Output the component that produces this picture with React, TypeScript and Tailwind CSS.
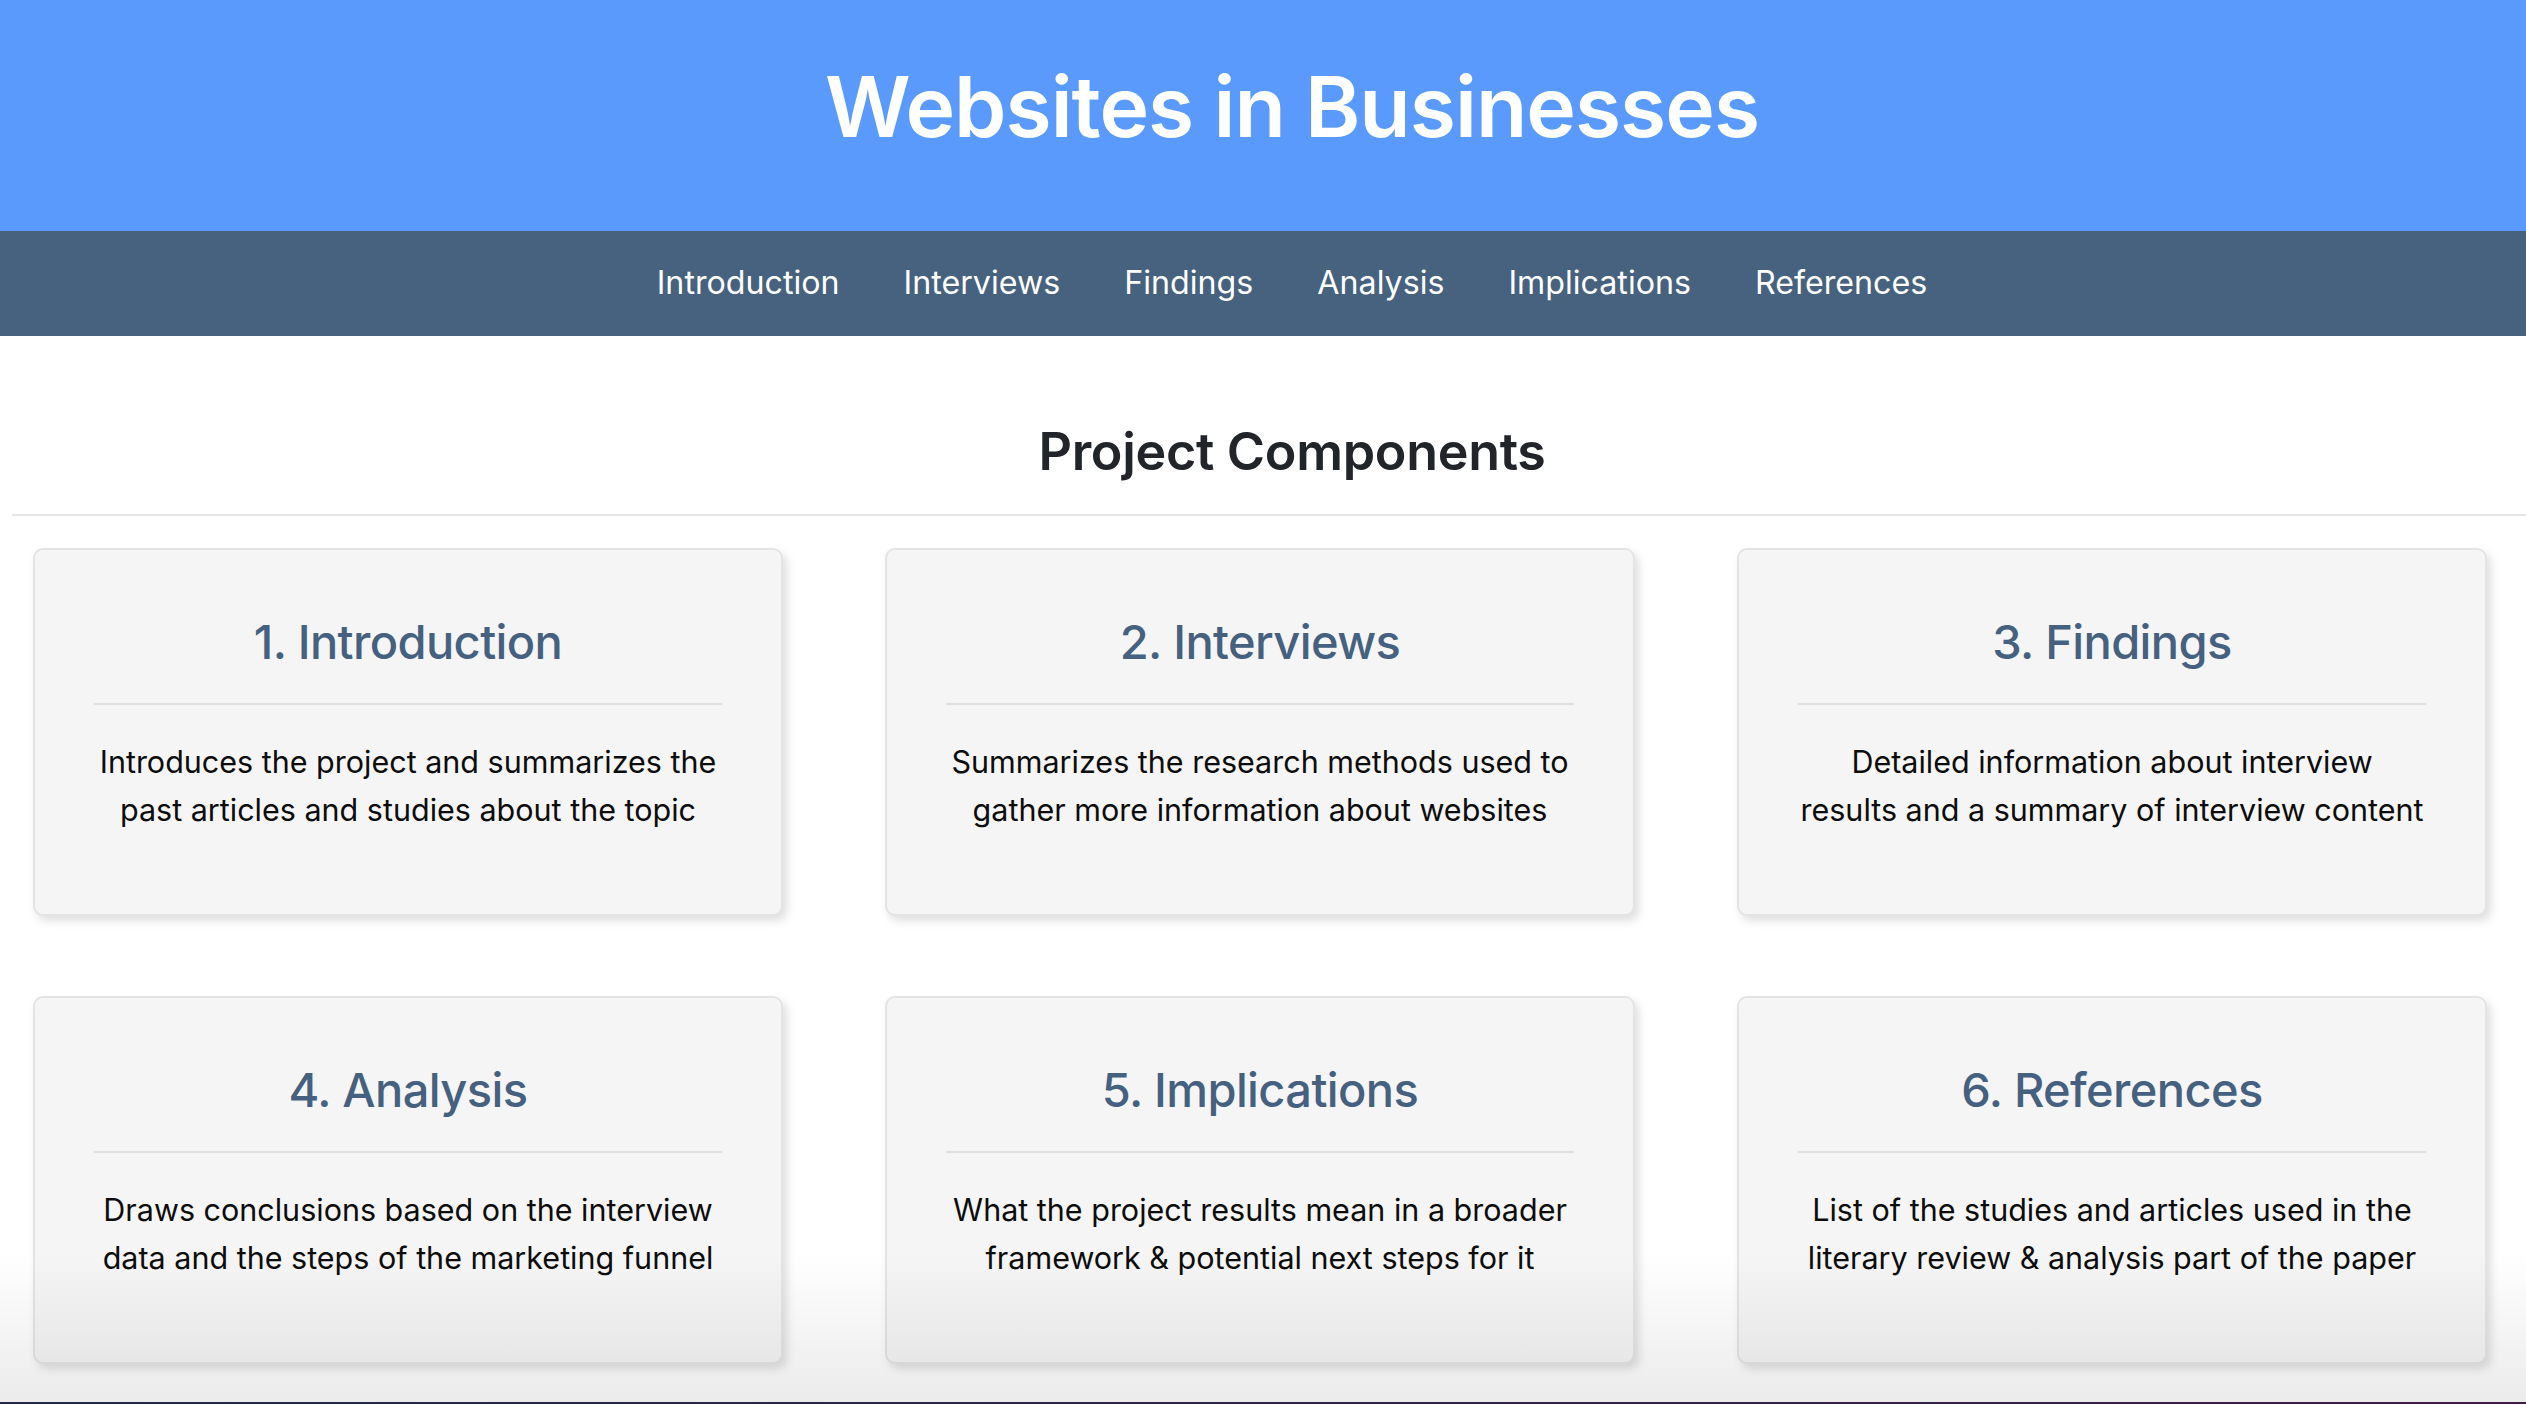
import React from 'react';

const navItems = ['Introduction', 'Interviews', 'Findings', 'Analysis', 'Implications', 'References'];

const components: { title: string; lines: string[] }[] = [
  { title: '1. Introduction', lines: ['Introduces the project and summarizes the', 'past articles and studies about the topic'] },
  { title: '2. Interviews', lines: ['Summarizes the research methods used to', 'gather more information about websites'] },
  { title: '3. Findings', lines: ['Detailed information about interview', 'results and a summary of interview content'] },
  { title: '4. Analysis', lines: ['Draws conclusions based on the interview', 'data and the steps of the marketing funnel'] },
  { title: '5. Implications', lines: ['What the project results mean in a broader', 'framework & potential next steps for it'] },
  { title: '6. References', lines: ['List of the studies and articles used in the', 'literary review & analysis part of the paper'] },
];

function ComponentCard({ title, lines }: { title: string; lines: string[] }) {
  return (
    <div className="h-[368px] rounded-[10px] border-2 border-[#e4e4e4] bg-[#f5f5f5] px-[59px] pt-[62px] shadow-[4px_5px_10px_rgba(0,0,0,0.13)]">
      <h3 className="text-center text-[47px] font-medium leading-[60px] tracking-[-0.6px] text-[#45617f]">{title}</h3>
      <div className="mt-[31px] h-[2px] bg-[#dedede]" />
      <p className="mt-[33px] text-center text-[30.5px] leading-[48px] text-[#0d0d0d]">
        {lines.map((line) => (
          <span key={line} className="block whitespace-nowrap">
            {line}
          </span>
        ))}
      </p>
    </div>
  );
}

export default function App() {
  return (
    <div className="relative min-h-[1404px] overflow-hidden bg-white font-['Inter','Liberation_Sans',sans-serif]">
      <header className="flex h-[231px] items-center justify-center bg-[#5a9afc] pl-[58px]">
        <h1 className="pb-[18px] text-[84px] font-semibold tracking-[-1px] text-white">Websites in Businesses</h1>
      </header>

      <nav className="flex h-[105px] items-center justify-center gap-[64px] bg-[#46627f] pl-[58px]">
        {navItems.map((item) => (
          <a key={item} href="#" className="text-[32.2px] leading-none text-white">
            {item}
          </a>
        ))}
      </nav>

      <section>
        <h2 className="pt-[83px] pb-[29px] pl-[58px] text-center text-[52px] font-semibold leading-[66px] tracking-[-0.3px] text-[#212529]">
          Project Components
        </h2>
        <div className="ml-[12px] h-[2px] bg-[#e6e6e6]" />

        <div className="grid grid-cols-3 gap-x-[102px] gap-y-[80px] pl-[33px] pr-[39px] pt-[32px]">
          {components.map((c) => (
            <ComponentCard key={c.title} title={c.title} lines={c.lines} />
          ))}
        </div>
      </section>

      {/* bottom screen edge shading */}
      <div className="pointer-events-none absolute inset-x-0 bottom-[2px] h-[150px] bg-gradient-to-b from-transparent to-[rgba(0,0,0,0.08)]" />
      <div className="absolute inset-x-0 bottom-0 h-[2px] bg-gradient-to-r from-[#1b2a46] to-[#401c44]" />
    </div>
  );
}
